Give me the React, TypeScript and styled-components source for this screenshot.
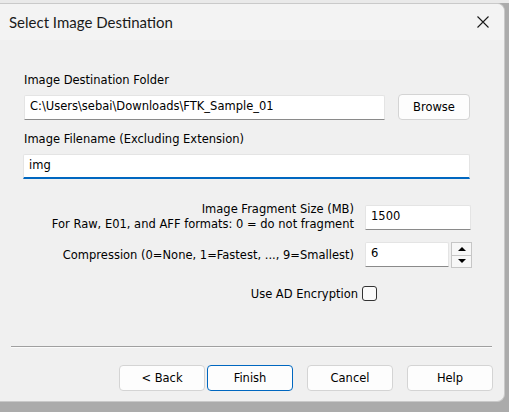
import React from "react";
import styled, { createGlobalStyle } from "styled-components";

const GlobalStyle = createGlobalStyle`
  html, body {
    margin: 0;
    padding: 0;
    background: #a9a9a9;
  }
  * { box-sizing: border-box; }
`;

const Desktop = styled.div`
  width: 509px;
  height: 412px;
  padding: 3px 4px 10px 0;
  background: linear-gradient(#e9e9e9 0 3px, #ababab 3px);
  overflow: hidden;
`;

const Dialog = styled.div`
  height: 399px;
  background: #f0f0f0;
  border: 1px solid #c9c9c9;
  border-left: none;
  border-radius: 0 8px 8px 0;
  display: flex;
  flex-direction: column;
  font-family: "DejaVu Sans", Verdana, sans-serif;
  font-size: 11.5px;
  color: #000;
  overflow: hidden;
`;

const TitleBar = styled.div`
  height: 36px;
  flex-shrink: 0;
  background: #f3f3f3;
  display: flex;
  align-items: center;
  justify-content: space-between;
  padding: 0 14px 0 9px;
`;

const Title = styled.span`
  font-family: Lato, "Open Sans", sans-serif;
  font-size: 15px;
  color: #1a1a1a;
`;

const CloseButton = styled.button`
  border: none;
  background: transparent;
  padding: 0;
  width: 14px;
  height: 14px;
  display: flex;
  align-items: center;
  justify-content: center;
`;

const Body = styled.div`
  flex: 1;
  display: flex;
  flex-direction: column;
  padding: 33px 34px 0 24px;
`;

const FieldLabel = styled.div<{ $top: number }>`
  margin-top: ${(p) => p.$top}px;
  line-height: 15px;
`;

const PathRow = styled.div`
  display: flex;
  align-items: center;
  gap: 13px;
  margin-top: 6px;
`;

const TextBox = styled.div<{ $focused?: boolean; $width?: number }>`
  height: 25px;
  width: ${(p) => (p.$width ? `${p.$width}px` : "auto")};
  flex: ${(p) => (p.$width ? "none" : "1")};
  background: #fff;
  border: 1px solid #e4e4e4;
  border-bottom: ${(p) => (p.$focused ? "2px solid #0067c0" : "1px solid #8a8a8a")};
  border-radius: 2px 2px 0 0;
  display: flex;
  align-items: center;
  padding: 0 5px;
  line-height: 15px;
  padding-bottom: ${(p) => (p.$focused ? 1 : 2)}px;
`;

const Button = styled.button<{ $default?: boolean; $width?: number }>`
  width: ${(p) => p.$width ?? 86}px;
  height: 26px;
  background: #fdfdfd;
  border: 1px solid ${(p) => (p.$default ? "#0067c0" : "#d4d4d4")};
  border-radius: 4px;
  font-family: "DejaVu Sans", Verdana, sans-serif;
  font-size: 11.5px;
  color: #000;
  padding: 0;
`;

const FilenameBox = styled.div`
  margin-top: 7px;
  width: 447px;
  margin-left: -1px;
`;

const OptionsGrid = styled.div`
  display: grid;
  grid-template-columns: 330px 106px auto;
  column-gap: 11px;
  row-gap: 10px;
  align-items: center;
  margin-top: 23px;
`;

const OptionLabel = styled.div`
  text-align: right;
  line-height: 15px;
  white-space: nowrap;
`;

const SpinWrap = styled.div`
  display: flex;
  gap: 2px;
  width: 107px;
`;

const SpinButtons = styled.div`
  width: 21px;
  height: 26px;
  border: 1px solid #c6c6c6;
  display: flex;
  flex-direction: column;
  background: #f7f7f7;
`;

const SpinHalf = styled.div<{ $down?: boolean }>`
  flex: 1;
  display: flex;
  align-items: center;
  justify-content: center;
  border-top: ${(p) => (p.$down ? "1px solid #c6c6c6" : "none")};
`;

const Arrow = styled.span<{ $down?: boolean }>`
  width: 0;
  height: 0;
  border-left: 4px solid transparent;
  border-right: 4px solid transparent;
  ${(p) => (p.$down ? "border-top: 4px solid #000;" : "border-bottom: 4px solid #000;")}
`;

const CheckRow = styled.div`
  display: flex;
  justify-content: flex-end;
  align-items: center;
  gap: 4px;
  width: 353px;
  margin-top: 18px;
`;

const CheckBox = styled.span`
  width: 15px;
  height: 15px;
  border: 1px solid #333;
  border-radius: 3px;
  background: #fbfbfb;
`;

const Separator = styled.div`
  margin: 45px 12px 0 11px;
  border-top: 1px solid #a0a0a0;
  border-bottom: 1px solid #fbfbfb;
`;

const ButtonRow = styled.div`
  display: flex;
  justify-content: flex-end;
  padding: 17px 11px 0 0;
  gap: 14px;
`;

const Pair = styled.div`
  display: flex;
  gap: 2px;
`;

export default function App() {
  return (
    <>
      <GlobalStyle />
      <Desktop>
        <Dialog>
          <TitleBar>
            <Title>Select Image Destination</Title>
            <CloseButton aria-label="Close">
              <svg width="12" height="12" viewBox="0 0 12 12">
                <path d="M0.5 0.5 L11.5 11.5 M11.5 0.5 L0.5 11.5" stroke="#1a1a1a" strokeWidth="1.1" />
              </svg>
            </CloseButton>
          </TitleBar>
          <Body>
            <FieldLabel $top={0}>Image Destination Folder</FieldLabel>
            <PathRow>
              <TextBox>C:\Users\sebai\Downloads\FTK_Sample_01</TextBox>
              <Button $width={72}>Browse</Button>
            </PathRow>
            <FieldLabel $top={12}>Image Filename (Excluding Extension)</FieldLabel>
            <FilenameBox>
              <TextBox $focused>img</TextBox>
            </FilenameBox>
            <OptionsGrid>
              <OptionLabel>
                Image Fragment Size (MB)
                <br />
                For Raw, E01, and AFF formats: 0 = do not fragment
              </OptionLabel>
              <TextBox $width={106}>1500</TextBox>
              <span />
              <OptionLabel>Compression (0=None, 1=Fastest, ..., 9=Smallest)</OptionLabel>
              <SpinWrap>
                <TextBox $width={84}>6</TextBox>
                <SpinButtons>
                  <SpinHalf>
                    <Arrow />
                  </SpinHalf>
                  <SpinHalf $down>
                    <Arrow $down />
                  </SpinHalf>
                </SpinButtons>
              </SpinWrap>
              <span />
            </OptionsGrid>
            <CheckRow>
              Use AD Encryption
              <CheckBox />
            </CheckRow>
          </Body>
          <Separator />
          <ButtonRow>
            <Pair>
              <Button>&lt; Back</Button>
              <Button $default>Finish</Button>
            </Pair>
            <Button>Cancel</Button>
            <Button>Help</Button>
          </ButtonRow>
          <div style={{ height: 11 }} />
        </Dialog>
      </Desktop>
    </>
  );
}
